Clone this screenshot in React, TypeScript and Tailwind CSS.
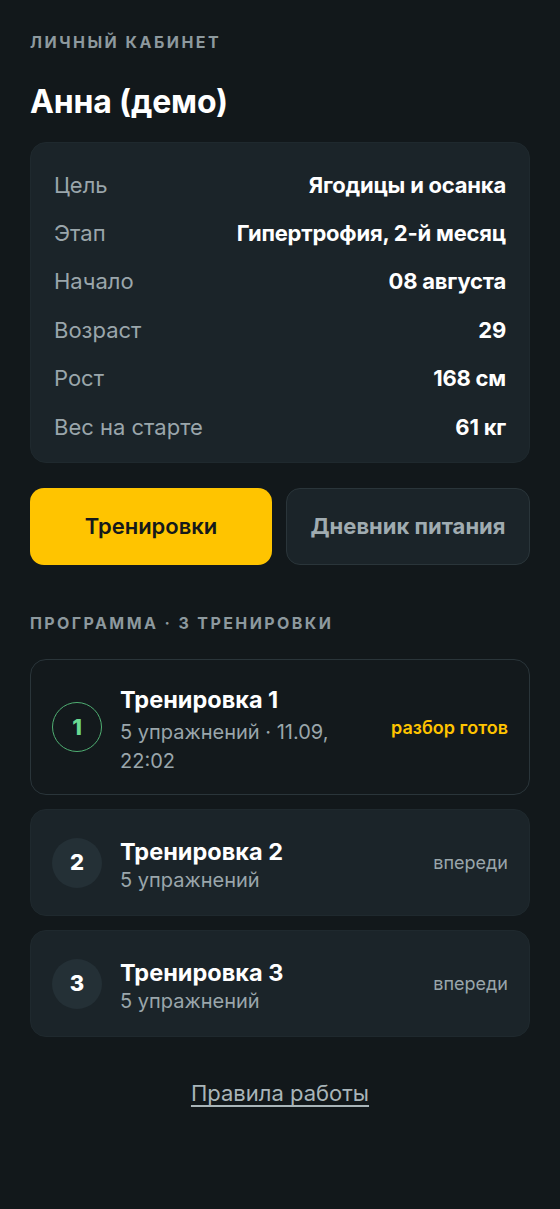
import React from "react";

const font = { fontFamily: "Inter, 'Noto Sans', sans-serif" };

const rows: [string, string][] = [
  ["Цель", "Ягодицы и осанка"],
  ["Этап", "Гипертрофия, 2-й месяц"],
  ["Начало", "08 августа"],
  ["Возраст", "29"],
  ["Рост", "168 см"],
  ["Вес на старте", "61 кг"],
];

export default function App() {
  return (
    <div style={font} className="min-h-[1209px] w-[560px] bg-[#12181b] px-[30px] pt-[32px] text-white">
      <div className="text-[16px] font-bold uppercase tracking-[0.155em] text-[#8d999e] leading-[20px]">
        Личный кабинет
      </div>
      <h1 className="mt-[31px] text-[32px] font-bold leading-[38px] tracking-[-0.005em]">Анна (демо)</h1>

      <div className="mt-[21px] rounded-[16px] border border-[#1f292e] bg-[#1b2429] px-[23px] pt-[18px] pb-[11px]">
        {rows.map(([k, v]) => (
          <div key={k} className="flex h-[48.4px] items-center justify-between">
            <span className="text-[22px] text-[#9aa6ab]">{k}</span>
            <span className="text-[22px] font-bold tracking-[-0.01em] text-white">{v}</span>
          </div>
        ))}
      </div>

      <div className="mt-[25px] flex gap-[14px]">
        <button className="flex h-[77px] flex-1 items-center justify-center rounded-[14px] bg-[#ffc400] text-[22px] font-semibold text-[#15191b]">
          Тренировки
        </button>
        <button className="flex h-[77px] flex-1 items-center justify-center rounded-[14px] border border-[#2a353a] bg-[#1b2429] text-[22px] font-bold text-[#a0acb1]">
          Дневник питания
        </button>
      </div>

      <div className="mt-[48px] text-[16px] font-bold uppercase tracking-[0.15em] text-[#8d999e] leading-[20px]">
        Программа · 3 тренировки
      </div>

      <div className="mt-[26px] flex flex-col gap-[14px]">
        <div className="flex h-[136px] items-center rounded-[16px] border border-[#2a353a] bg-[#13191c] pl-[21px] pr-[21px]">
          <div className="flex h-[50px] w-[50px] shrink-0 items-center justify-center rounded-full border-[1.5px] border-[#4fae72] text-[22px] font-extrabold text-[#6ad991]">
            1
          </div>
          <div className="ml-[18px] flex-1 pt-[6px]">
            <div className="text-[23.5px] font-bold leading-[30px]">Тренировка 1</div>
            <div className="mt-[3px] w-[232px] text-[20px] leading-[29px] text-[#9aa6ab]">
              5 упражнений · 11.09, 22:02
            </div>
          </div>
          <div className="text-[18px] font-semibold text-[#ffc400]">разбор готов</div>
        </div>

        {[2, 3].map((n) => (
          <div
            key={n}
            className="flex h-[107px] items-center rounded-[16px] border border-[#1f292e] bg-[#1b2429] pl-[21px] pr-[21px]"
          >
            <div className="flex h-[50px] w-[50px] shrink-0 items-center justify-center rounded-full bg-[#243036] text-[22px] font-extrabold text-white">
              {n}
            </div>
            <div className="ml-[18px] flex-1 pt-[5px]">
              <div className="text-[23.5px] font-bold leading-[30px]">Тренировка {n}</div>
              <div className="text-[20px] leading-[26px] text-[#9aa6ab]">5 упражнений</div>
            </div>
            <div className="text-[18px] text-[#9aa6ab]">впереди</div>
          </div>
        ))}
      </div>

      <div className="mt-[42px] text-center leading-[28px]">
        <a className="text-[22px] text-[#a9b5b9] underline underline-offset-[4px] decoration-[1.5px]">Правила работы</a>
      </div>
    </div>
  );
}
